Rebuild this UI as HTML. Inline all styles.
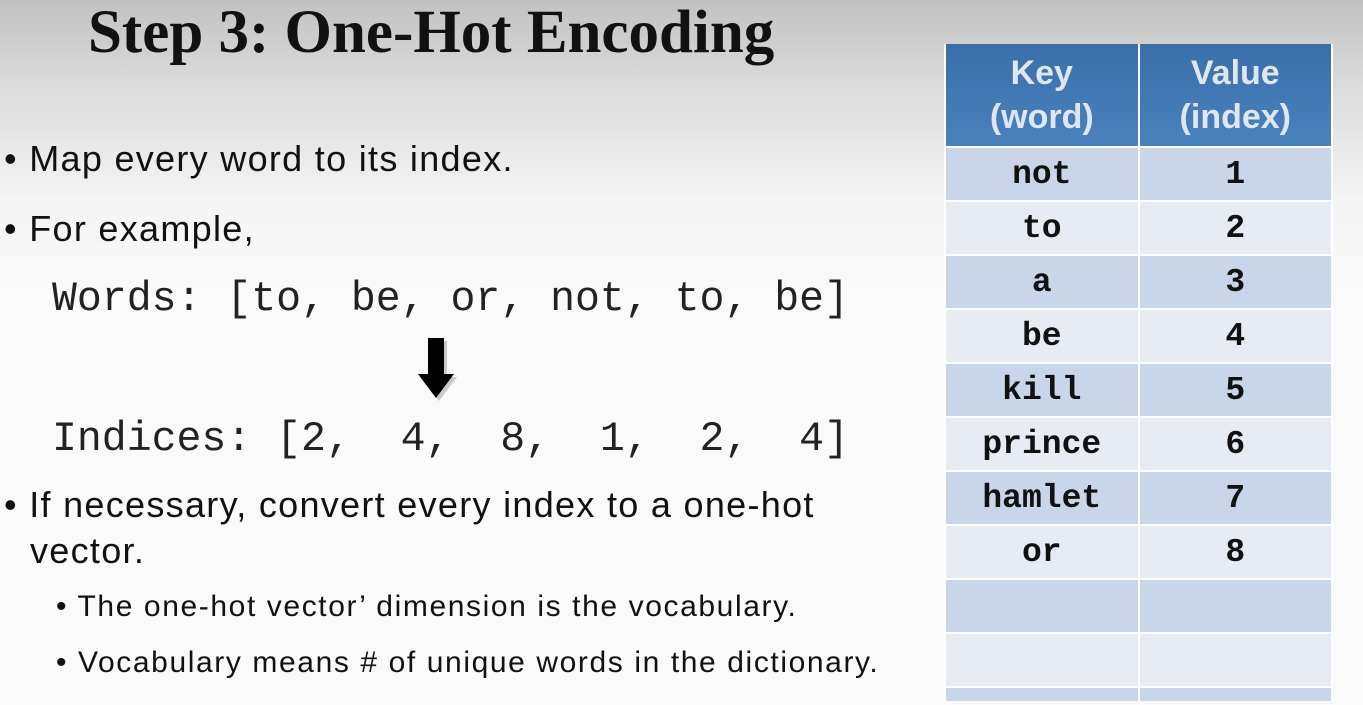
<!DOCTYPE html>
<html style="overflow:hidden;background:#fafafa"><head><style>
body{margin:0;width:1363px;height:705px;overflow:hidden;position:relative;
background:linear-gradient(#c2c2c2 0px,#dcdcdc 90px,#f4f4f4 200px,#fafafa 300px,#fafafa 705px);
font-family:"Liberation Sans",sans-serif;color:#111}
.t{position:absolute;white-space:pre}
h1{position:absolute;left:88px;top:-2px;margin:0;font:bold 61px "Liberation Serif",serif;white-space:nowrap}
.b{font-size:36px;letter-spacing:1.3px}
.m{font-family:"Liberation Mono",monospace;font-size:41.5px;color:#222}
.s{font-size:30px;letter-spacing:1.6px}
.clip{position:absolute;left:944px;top:44px;width:389px;height:661px;overflow:hidden}
table{border-collapse:collapse;width:389px}
td{border:2px solid #fff;text-align:center;height:52px;padding:0;font:bold 33px "Liberation Mono",monospace;color:#111}
tr.e td{height:13px;border-bottom:0}
th{background:linear-gradient(#3a6ea8,#4a82bf);color:#dfe6ef;font:bold 34px "Liberation Sans",sans-serif;height:102px;border:2px solid #fff;border-top:0;line-height:44px;padding:0;width:193px}
tr.d td{background:#c9d6ea}
tr.l td{background:#e6ebf4}
</style></head><body>
<h1>Step 3: One-Hot Encoding</h1>
<div class="t b" style="left:4px;top:138px">• Map every word to its index.</div>
<div class="t b" style="left:4px;top:208px">• For example,</div>
<div class="t m" style="left:52px;top:276px">Words: [to, be, or, not, to, be]</div>
<svg class="t" style="left:412px;top:334px" width="50" height="70"><path d="M16 4h16v36h10L24 64 6 40h10z" fill="#999" opacity=".5" transform="translate(3,3)"/><path d="M16 4h16v36h10L24 64 6 40h10z" fill="#000"/></svg>
<div class="t m" style="left:52px;top:416px">Indices: [2,  4,  8,  1,  2,  4]</div>
<div class="t b" style="left:4px;top:484px">• If necessary, convert every index to a one-hot</div>
<div class="t b" style="left:30px;top:530px">vector.</div>
<div class="t s" style="left:56px;top:590px">• The one-hot vector’ dimension is the vocabulary.</div>
<div class="t s" style="left:56px;top:646px">• Vocabulary means # of unique words in the dictionary.</div>
<div class="clip"><table>
<tr><th>Key<br>(word)</th><th>Value<br>(index)</th></tr>
<tr class="d"><td>not</td><td>1</td></tr>
<tr class="l"><td>to</td><td>2</td></tr>
<tr class="d"><td>a</td><td>3</td></tr>
<tr class="l"><td>be</td><td>4</td></tr>
<tr class="d"><td>kill</td><td>5</td></tr>
<tr class="l"><td>prince</td><td>6</td></tr>
<tr class="d"><td>hamlet</td><td>7</td></tr>
<tr class="l"><td>or</td><td>8</td></tr>
<tr class="d"><td></td><td></td></tr>
<tr class="l"><td></td><td></td></tr>
<tr class="d e"><td></td><td></td></tr>
</table></div>
</body></html>
